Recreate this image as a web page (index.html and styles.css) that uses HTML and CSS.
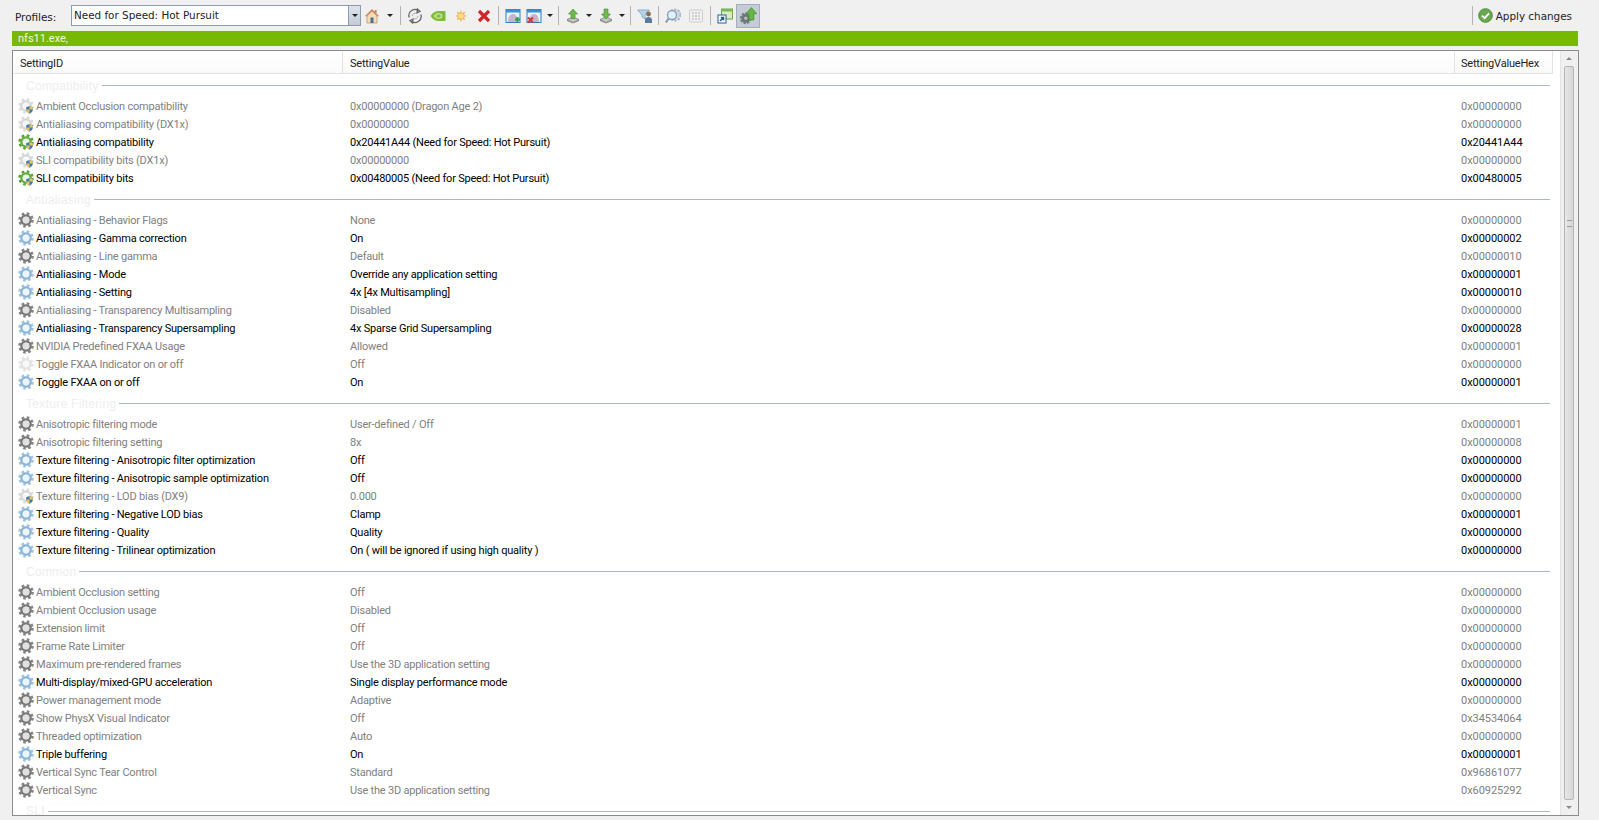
FILE: index.html
```html
<!DOCTYPE html>
<html lang="en">
<head>
<meta charset="utf-8">
<title>Profile Inspector</title>
<link rel="stylesheet" href="styles.css">
</head>
<body>
<svg class="defs" width="0" height="0" aria-hidden="true">
  <defs>
    <g id="shield">
      <path d="M8.2 9.2 11.5 8l3.3 1.2v2.6c0 1.8-1.4 3-3.3 3.9-1.9-.9-3.3-2.1-3.3-3.9z" fill="#3f78c0"/>
      <path d="M11.5 8l3.3 1.2v2.4h-3.3zM11.5 11.6v4.1c-1.9-.9-3.3-2.1-3.3-3.9v-.2z" fill="#e9c84a"/>
    </g>
    <g id="gear-grey">
      <circle cx="8" cy="8" r="6.5" fill="none" stroke="#858585" stroke-width="2.6" stroke-dasharray="2.6 2.5"/>
      <circle cx="8" cy="8" r="4.6" fill="none" stroke="#787878" stroke-width="2.4"/>
      <circle cx="8" cy="8" r="3.3" fill="#e0e0e0"/>
    </g>
    <g id="gear-blue">
      <circle cx="8" cy="8" r="6.5" fill="none" stroke="#a0c3e0" stroke-width="2.6" stroke-dasharray="2.6 2.5"/>
      <circle cx="8" cy="8" r="4.6" fill="none" stroke="#8ab3d8" stroke-width="2.4"/>
      <circle cx="8" cy="8" r="3.3" fill="#edf5fc"/>
    </g>
    <g id="gear-green">
      <circle cx="8" cy="8" r="6.5" fill="none" stroke="#5aa338" stroke-width="2.6" stroke-dasharray="2.6 2.5"/>
      <circle cx="8" cy="8" r="4.6" fill="none" stroke="#62ad3e" stroke-width="2.4"/>
      <circle cx="8" cy="8" r="3.3" fill="#eaf5e2"/>
      <use href="#shield"/>
    </g>
    <g id="gear-pale">
      <circle cx="8" cy="8" r="6.5" fill="none" stroke="#dcdcdc" stroke-width="2.6" stroke-dasharray="2.6 2.5"/>
      <circle cx="8" cy="8" r="4.6" fill="none" stroke="#d6d6d6" stroke-width="2.4"/>
      <circle cx="8" cy="8" r="3.3" fill="#f6f6f6"/>
      <use href="#shield"/>
    </g>
    <g id="gear-faint">
      <circle cx="8" cy="8" r="6.5" fill="none" stroke="#e6e6e6" stroke-width="2.6" stroke-dasharray="2.6 2.5"/>
      <circle cx="8" cy="8" r="4.6" fill="none" stroke="#e2e2e2" stroke-width="2.4"/>
      <circle cx="8" cy="8" r="3.3" fill="#f8f8f8"/>
    </g>
    <g id="window">
      <rect x="1" y="1.5" width="14" height="13" fill="#eef4fb" stroke="#2f7fc4"/>
      <rect x="1" y="1.5" width="14" height="3" fill="#3d8fd3"/>
      <path d="M3 14c0-5 2-8 5-8s5 3 5 8z" fill="#c8b4c8"/>
    </g>
    <g id="disk">
      <path d="M2 11.5 8 9l6 2.5L8 14.5z" fill="#c6c9c3" stroke="#7f837c" stroke-width=".8"/>
      <path d="M2 11.5v1.6l6 2.5 6-2.5v-1.6l-6 3z" fill="#8d918a"/>
    </g>
  </defs>
</svg>

<header class="toolbar">
  <span class="profiles-label">Profiles:</span>
  <div class="combo">
    <span class="combo-text">Need for Speed: Hot Pursuit</span>
    <span class="combo-arrow"><i class="caret"></i></span>
  </div>
  <span class="tb tb-short">
    <svg class="ico" viewBox="0 0 16 16"><path d="M8 1.500 1.500 8H3v7h10V8h1.500z" fill="#f3dcb8" stroke="#b98a5a" stroke-width=".7"/><path d="M8 1.500 1.500 8H3l5-4.400L13 8h1.500z" fill="#cf7a55"/><rect x="6.500" y="9.500" width="3" height="5.500" fill="#4a6f8f"/><rect x="10.800" y="2" width="1.800" height="3" fill="#b98a5a"/></svg>
  </span>
  <span class="drop drop-wide"><i class="caret"></i></span>
  <i class="sep"></i>
  <span class="tb">
    <svg class="ico" viewBox="0 0 16 16" fill="none" stroke="#666" stroke-width="1.300"><path d="M2.200 9.500A6 6 0 0 1 12 3.200"/><path d="M13.800 6.500A6 6 0 0 1 4 12.800"/><path d="M10.400 1l2.600 2.400-3 1.500zM5.600 15 3 12.600l3-1.500z" fill="#fff"/><path d="M5 8.200a3.200 3.200 0 0 1 5-2.400M11 7.800a3.200 3.200 0 0 1-5 2.400" stroke="#aaa" stroke-width="1"/></svg>
  </span>
  <span class="tb">
    <svg class="ico" viewBox="0 0 16 16"><path d="M.5 8C2.500 4.500 5.500 3 8.500 3h7v10h-7C5.500 13 2.500 11.500.5 8z" fill="#7fbc3a"/><path d="M3.500 8c1.500-2 3.500-3 5-3 2 0 4 1.300 4 3s-2 3-4 3c-1.500 0-3.500-1-5-3z" fill="#c0e08c"/><path d="M6 8c1-1 2-1.500 3-1.500S10.500 7 10.500 8 10 9.500 9 9.500 7 9 6 8z" fill="#7fbc3a"/></svg>
  </span>
  <span class="tb">
    <svg class="ico" viewBox="0 0 16 16"><path d="M8 2 9.100 5 12.200 3.800 11 6.900 14 8 11 9.100 12.200 12.200 9.100 11 8 14 6.900 11 3.800 12.200 5 9.100 2 8 5 6.900 3.800 3.800 6.900 5z" fill="#f3b04a"/><circle cx="8" cy="8" r="2.800" fill="#fbdc85"/></svg>
  </span>
  <span class="tb">
    <svg class="ico" viewBox="0 0 16 16"><path d="M3 3l10 10M13 3 3 13" stroke="#d3232a" stroke-width="3.200" fill="none"/></svg>
  </span>
  <i class="sep sep-wide"></i>
  <span class="tb">
    <svg class="ico" viewBox="0 0 16 16"><use href="#window"/><path d="M10 11.500h5M12.500 9v5" stroke="#2f9e3f" stroke-width="2"/></svg>
  </span>
  <span class="tb tb-short">
    <svg class="ico" viewBox="0 0 16 16"><use href="#window"/><path d="M2 9.500l5 5M7 9.500l-5 5" stroke="#d3363a" stroke-width="2"/></svg>
  </span>
  <span class="drop drop-mid"><i class="caret"></i></span>
  <i class="sep"></i>
  <span class="tb">
    <svg class="ico" viewBox="0 0 16 16"><use href="#disk"/><path d="M8 1 12.500 6H10v4.500H6V6H3.500z" fill="#72b850" stroke="#3f8a2c" stroke-width=".6"/></svg>
  </span>
  <span class="drop"><i class="caret"></i></span>
  <span class="tb">
    <svg class="ico" viewBox="0 0 16 16"><use href="#disk"/><path d="M8 11 12.500 6H10V1H6v5H3.500z" fill="#72b850" stroke="#3f8a2c" stroke-width=".6"/></svg>
  </span>
  <span class="drop"><i class="caret"></i></span>
  <i class="sep sep-wide"></i>
  <span class="tb">
    <svg class="ico" viewBox="0 0 16 16"><path d="M.5 2h12L8 7v4L5 9V7z" fill="#b5d3e8" stroke="#7ba6c4" stroke-width=".8"/><circle cx="11.500" cy="6" r="2.400" fill="#8a6a58"/><path d="M8 15v-3c0-2 1.500-3 3.500-3s3.500 1 3.500 3v3z" fill="#5a7b9a"/></svg>
  </span>
  <i class="sep"></i>
  <span class="tb">
    <svg class="ico" viewBox="0 0 16 16"><circle cx="10" cy="7" r="5.500" fill="#cfdce8" stroke="#a5b4c4" stroke-width="2" stroke-dasharray="2 1.500"/><circle cx="7" cy="7" r="4.500" fill="#e4eff8" stroke="#7f9dba" stroke-width="1.300"/><path d="M3.500 10.500 1 14.500" stroke="#8a9aa8" stroke-width="2.200"/></svg>
  </span>
  <span class="tb">
    <svg class="ico" viewBox="0 0 16 16"><rect x="1.500" y="2" width="13" height="12" rx="1" fill="#f1f1f1" stroke="#cdcdcd"/><path d="M4 5h2M7 5h2M10 5h2M4 8h2M7 8h2M10 8h2M4 11h2M7 11h2M10 11h2" stroke="#c4c4c4" stroke-width="1.400"/></svg>
  </span>
  <i class="sep sep-wide"></i>
  <span class="tb">
    <svg class="ico" viewBox="0 0 16 16"><rect x="4.500" y="1" width="11" height="10" fill="#d7ecc0" stroke="#6aa84a"/><rect x="4.500" y="1" width="11" height="2.500" fill="#7cb85a"/><rect x="1" y="7" width="8" height="8" fill="#fff" stroke="#2c5a8c"/><path d="M3 13l3-3M3.800 9.500H6.500v2.700" stroke="#1f5a9c" stroke-width="1.500" fill="none"/></svg>
  </span>
  <span class="tb tb-active">
    <svg class="ico ico-active" viewBox="0 0 16 16"><circle cx="6" cy="10" r="4" fill="#6b7676" stroke="#727c7c" stroke-width="2.500" stroke-dasharray="2 1"/><circle cx="6" cy="10" r="1.500" fill="#b5bcc4"/><path d="M11 .5 15.800 6H13.200v5.500H8.800V6H6.200z" fill="#66b545" stroke="#3f8a2c" stroke-width=".6"/></svg>
  </span>
  <div class="apply">
    <i class="sep"></i>
    <svg class="apply-ico" viewBox="0 0 16 16"><circle cx="8" cy="8" r="7.300" fill="#6aa84f" stroke="#4f8a3a"/><path d="M4.300 8.200 7 10.800l4.800-5" fill="none" stroke="#fff" stroke-width="2"/></svg>
    <span class="apply-text">Apply changes</span>
  </div>
</header>

<div class="status">nfs11.exe,</div>

<main class="listbox">
  <div class="list">
    <div class="head">
      <span class="hc">SettingID</span>
      <span class="hc">SettingValue</span>
      <span class="hc">SettingValueHex</span>
    </div>

    <div class="group group-first"><span class="group-label">Compatibility</span></div>
    <div class="row dim"><span class="id"><svg class="gear" viewBox="0 0 16 16"><use href="#gear-pale"/></svg>Ambient Occlusion compatibility</span><span>0x00000000 (Dragon Age 2)</span><span>0x00000000</span></div>
    <div class="row dim"><span class="id"><svg class="gear" viewBox="0 0 16 16"><use href="#gear-pale"/></svg>Antialiasing compatibility (DX1x)</span><span>0x00000000</span><span>0x00000000</span></div>
    <div class="row"><span class="id"><svg class="gear" viewBox="0 0 16 16"><use href="#gear-green"/></svg>Antialiasing compatibility</span><span>0x20441A44 (Need for Speed: Hot Pursuit)</span><span>0x20441A44</span></div>
    <div class="row dim"><span class="id"><svg class="gear" viewBox="0 0 16 16"><use href="#gear-pale"/></svg>SLI compatibility bits (DX1x)</span><span>0x00000000</span><span>0x00000000</span></div>
    <div class="row"><span class="id"><svg class="gear" viewBox="0 0 16 16"><use href="#gear-green"/></svg>SLI compatibility bits</span><span>0x00480005 (Need for Speed: Hot Pursuit)</span><span>0x00480005</span></div>

    <div class="group"><span class="group-label">Antialiasing</span></div>
    <div class="row dim"><span class="id"><svg class="gear" viewBox="0 0 16 16"><use href="#gear-grey"/></svg>Antialiasing - Behavior Flags</span><span>None</span><span>0x00000000</span></div>
    <div class="row"><span class="id"><svg class="gear" viewBox="0 0 16 16"><use href="#gear-blue"/></svg>Antialiasing - Gamma correction</span><span>On</span><span>0x00000002</span></div>
    <div class="row dim"><span class="id"><svg class="gear" viewBox="0 0 16 16"><use href="#gear-grey"/></svg>Antialiasing - Line gamma</span><span>Default</span><span>0x00000010</span></div>
    <div class="row"><span class="id"><svg class="gear" viewBox="0 0 16 16"><use href="#gear-blue"/></svg>Antialiasing - Mode</span><span>Override any application setting</span><span>0x00000001</span></div>
    <div class="row"><span class="id"><svg class="gear" viewBox="0 0 16 16"><use href="#gear-blue"/></svg>Antialiasing - Setting</span><span>4x [4x Multisampling]</span><span>0x00000010</span></div>
    <div class="row dim"><span class="id"><svg class="gear" viewBox="0 0 16 16"><use href="#gear-grey"/></svg>Antialiasing - Transparency Multisampling</span><span>Disabled</span><span>0x00000000</span></div>
    <div class="row"><span class="id"><svg class="gear" viewBox="0 0 16 16"><use href="#gear-blue"/></svg>Antialiasing - Transparency Supersampling</span><span>4x Sparse Grid Supersampling</span><span>0x00000028</span></div>
    <div class="row dim"><span class="id"><svg class="gear" viewBox="0 0 16 16"><use href="#gear-grey"/></svg>NVIDIA Predefined FXAA Usage</span><span>Allowed</span><span>0x00000001</span></div>
    <div class="row dim"><span class="id"><svg class="gear" viewBox="0 0 16 16"><use href="#gear-faint"/></svg>Toggle FXAA Indicator on or off</span><span>Off</span><span>0x00000000</span></div>
    <div class="row"><span class="id"><svg class="gear" viewBox="0 0 16 16"><use href="#gear-blue"/></svg>Toggle FXAA on or off</span><span>On</span><span>0x00000001</span></div>

    <div class="group"><span class="group-label">Texture Filtering</span></div>
    <div class="row dim"><span class="id"><svg class="gear" viewBox="0 0 16 16"><use href="#gear-grey"/></svg>Anisotropic filtering mode</span><span>User-defined / Off</span><span>0x00000001</span></div>
    <div class="row dim"><span class="id"><svg class="gear" viewBox="0 0 16 16"><use href="#gear-grey"/></svg>Anisotropic filtering setting</span><span>8x</span><span>0x00000008</span></div>
    <div class="row"><span class="id"><svg class="gear" viewBox="0 0 16 16"><use href="#gear-blue"/></svg>Texture filtering - Anisotropic filter optimization</span><span>Off</span><span>0x00000000</span></div>
    <div class="row"><span class="id"><svg class="gear" viewBox="0 0 16 16"><use href="#gear-blue"/></svg>Texture filtering - Anisotropic sample optimization</span><span>Off</span><span>0x00000000</span></div>
    <div class="row dim"><span class="id"><svg class="gear" viewBox="0 0 16 16"><use href="#gear-pale"/></svg>Texture filtering - LOD bias (DX9)</span><span>0.000</span><span>0x00000000</span></div>
    <div class="row"><span class="id"><svg class="gear" viewBox="0 0 16 16"><use href="#gear-blue"/></svg>Texture filtering - Negative LOD bias</span><span>Clamp</span><span>0x00000001</span></div>
    <div class="row"><span class="id"><svg class="gear" viewBox="0 0 16 16"><use href="#gear-blue"/></svg>Texture filtering - Quality</span><span>Quality</span><span>0x00000000</span></div>
    <div class="row"><span class="id"><svg class="gear" viewBox="0 0 16 16"><use href="#gear-blue"/></svg>Texture filtering - Trilinear optimization</span><span>On ( will be ignored if using high quality )</span><span>0x00000000</span></div>

    <div class="group"><span class="group-label">Common</span></div>
    <div class="row dim"><span class="id"><svg class="gear" viewBox="0 0 16 16"><use href="#gear-grey"/></svg>Ambient Occlusion setting</span><span>Off</span><span>0x00000000</span></div>
    <div class="row dim"><span class="id"><svg class="gear" viewBox="0 0 16 16"><use href="#gear-grey"/></svg>Ambient Occlusion usage</span><span>Disabled</span><span>0x00000000</span></div>
    <div class="row dim"><span class="id"><svg class="gear" viewBox="0 0 16 16"><use href="#gear-grey"/></svg>Extension limit</span><span>Off</span><span>0x00000000</span></div>
    <div class="row dim"><span class="id"><svg class="gear" viewBox="0 0 16 16"><use href="#gear-grey"/></svg>Frame Rate Limiter</span><span>Off</span><span>0x00000000</span></div>
    <div class="row dim"><span class="id"><svg class="gear" viewBox="0 0 16 16"><use href="#gear-grey"/></svg>Maximum pre-rendered frames</span><span>Use the 3D application setting</span><span>0x00000000</span></div>
    <div class="row"><span class="id"><svg class="gear" viewBox="0 0 16 16"><use href="#gear-blue"/></svg>Multi-display/mixed-GPU acceleration</span><span>Single display performance mode</span><span>0x00000000</span></div>
    <div class="row dim"><span class="id"><svg class="gear" viewBox="0 0 16 16"><use href="#gear-grey"/></svg>Power management mode</span><span>Adaptive</span><span>0x00000000</span></div>
    <div class="row dim"><span class="id"><svg class="gear" viewBox="0 0 16 16"><use href="#gear-grey"/></svg>Show PhysX Visual Indicator</span><span>Off</span><span>0x34534064</span></div>
    <div class="row dim"><span class="id"><svg class="gear" viewBox="0 0 16 16"><use href="#gear-grey"/></svg>Threaded optimization</span><span>Auto</span><span>0x00000000</span></div>
    <div class="row"><span class="id"><svg class="gear" viewBox="0 0 16 16"><use href="#gear-blue"/></svg>Triple buffering</span><span>On</span><span>0x00000001</span></div>
    <div class="row dim"><span class="id"><svg class="gear" viewBox="0 0 16 16"><use href="#gear-grey"/></svg>Vertical Sync Tear Control</span><span>Standard</span><span>0x96861077</span></div>
    <div class="row dim"><span class="id"><svg class="gear" viewBox="0 0 16 16"><use href="#gear-grey"/></svg>Vertical Sync</span><span>Use the 3D application setting</span><span>0x60925292</span></div>

    <div class="group group-last"><span class="group-label">SLI</span></div>
  </div>
  <aside class="scrollbar">
    <i class="sb-up"></i>
    <div class="thumb"><i class="grip"></i></div>
    <i class="sb-down"></i>
  </aside>
</main>
</body>
</html>
```

FILE: styles.css
```css
* { box-sizing: border-box; }
html, body { margin: 0; height: 100%; }
body {
  width: 1599px;
  height: 820px;
  overflow: hidden;
  background: #f0f0f0;
  color: #000;
  font-family: Roboto, "Liberation Sans", sans-serif;
  font-size: 11px;
}
.defs { position: absolute; }

.toolbar {
  display: flex;
  align-items: center;
  height: 31px;
  padding: 0 27px 0 15px;
  font-family: "DejaVu Sans", sans-serif;
  font-size: 10.4px;
  color: #222;
}
.profiles-label { width: 56px; padding-top: 3px; }
.combo {
  display: flex;
  width: 290px;
  height: 21px;
  margin-right: 1px;
  background: #fff;
  border: 1px solid #8a9bb2;
}
.combo-text { flex: 1; padding: 3px 0 0 2px; }
.combo-arrow {
  display: flex;
  align-items: center;
  justify-content: center;
  width: 12px;
  background: linear-gradient(#dde3ea, #c2ccd8);
  border-left: 1px solid #8a9bb2;
}
.caret {
  display: block;
  width: 0;
  height: 0;
  border: 3px solid transparent;
  border-top: 3px solid #222;
  border-bottom: 0;
}
.tb {
  display: flex;
  align-items: center;
  justify-content: center;
  width: 23px;
  height: 24px;
  border: 1px solid transparent;
}
.tb-short { width: 20px; }
.tb-active {
  width: 24px;
  background: #c5ccd6;
  border-color: #a3aebc;
}
.ico { width: 16px; height: 16px; display: block; }
.ico-active { width: 18px; height: 18px; }
.drop {
  display: flex;
  justify-content: center;
  width: 10px;
}
.drop-wide { width: 16px; }
.drop-mid { width: 12px; }
.sep {
  display: block;
  width: 1px;
  height: 19px;
  margin: 0 2px;
  background: #b4b4b4;
}
.sep-wide { margin-left: 3px; }
.apply {
  display: flex;
  align-items: center;
  margin-left: auto;
}
.apply-ico { width: 15px; height: 15px; margin: 0 3px 0 3px; }
.apply-text { white-space: nowrap; }

.status {
  width: 1566px;
  height: 15px;
  margin-left: 12px;
  padding-left: 6px;
  background: #76b900;
  color: #f2f7e4;
  line-height: 15px;
}

.listbox {
  display: flex;
  width: 1567px;
  height: 766px;
  margin: 4px 0 0 12px;
  background: #fff;
  border: 1px solid #8c8c8c;
}
.list { flex: 1; min-width: 0; }
.head, .row {
  display: grid;
  grid-template-columns: 330px 1112px 98px;
}
.head {
  height: 23px;
  width: 1540px;
  border-bottom: 1px solid #e3e3e3;
  background: linear-gradient(#fff, #fafafa);
  color: #222;
  letter-spacing: -.2px;
}
.hc {
  padding: 6px 0 0 7px;
  border-right: 1px solid #e3e3e3;
}
.hc:last-child { padding-left: 6px; }
.group {
  display: flex;
  align-items: center;
  gap: 3px;
  width: 1537px;
  height: 24px;
  padding: 1px 0 0 13px;
  color: #eeeeee;
  font-family: "Liberation Sans", sans-serif;
  font-size: 12px;
  letter-spacing: .3px;
}
.group::after {
  content: "";
  flex: 1;
  height: 1px;
  background: #a9b6c7;
}
.group-first { height: 23px; padding-top: 0; }
.group-last { height: 16px; padding-top: 8px; line-height: 8px; }
.group-label { white-space: nowrap; }
.row {
  height: 18px;
  line-height: 18px;
  white-space: nowrap;
  letter-spacing: -.21px;
}
.row > span { padding: 1px 0 0 7px; }
.row > span:last-child { padding-left: 6px; letter-spacing: -.05px; }
.row > .id {
  display: flex;
  align-items: flex-start;
  padding-left: 5px;
}
.gear { width: 16px; height: 16px; margin-right: 2px; flex: none; }
.dim { color: #808080; }

.scrollbar {
  position: relative;
  flex: none;
  width: 18px;
  background: #f0f0f0;
  border-left: 1px solid #e4e4e4;
  padding: 15px 4px 15px 3px;
}
.thumb {
  display: flex;
  flex-direction: column;
  align-items: center;
  height: 734px;
  padding-top: 153px;
  background: linear-gradient(90deg, #e8e8e8, #d6d6d6);
  border: 1px solid #b5b5b5;
  border-radius: 2px;
}
.grip {
  display: block;
  width: 5px;
  height: 7px;
  border-top: 1px solid #9a9a9a;
  border-bottom: 1px solid #9a9a9a;
}
.sb-up, .sb-down {
  position: absolute;
  left: 5px;
  width: 0;
  height: 0;
  border: 3px solid transparent;
}
.sb-up { top: 6px; border-top: 0; border-bottom: 3px solid #8a8a8a; }
.sb-down { bottom: 6px; border-bottom: 0; border-top: 3px solid #8a8a8a; }
```
